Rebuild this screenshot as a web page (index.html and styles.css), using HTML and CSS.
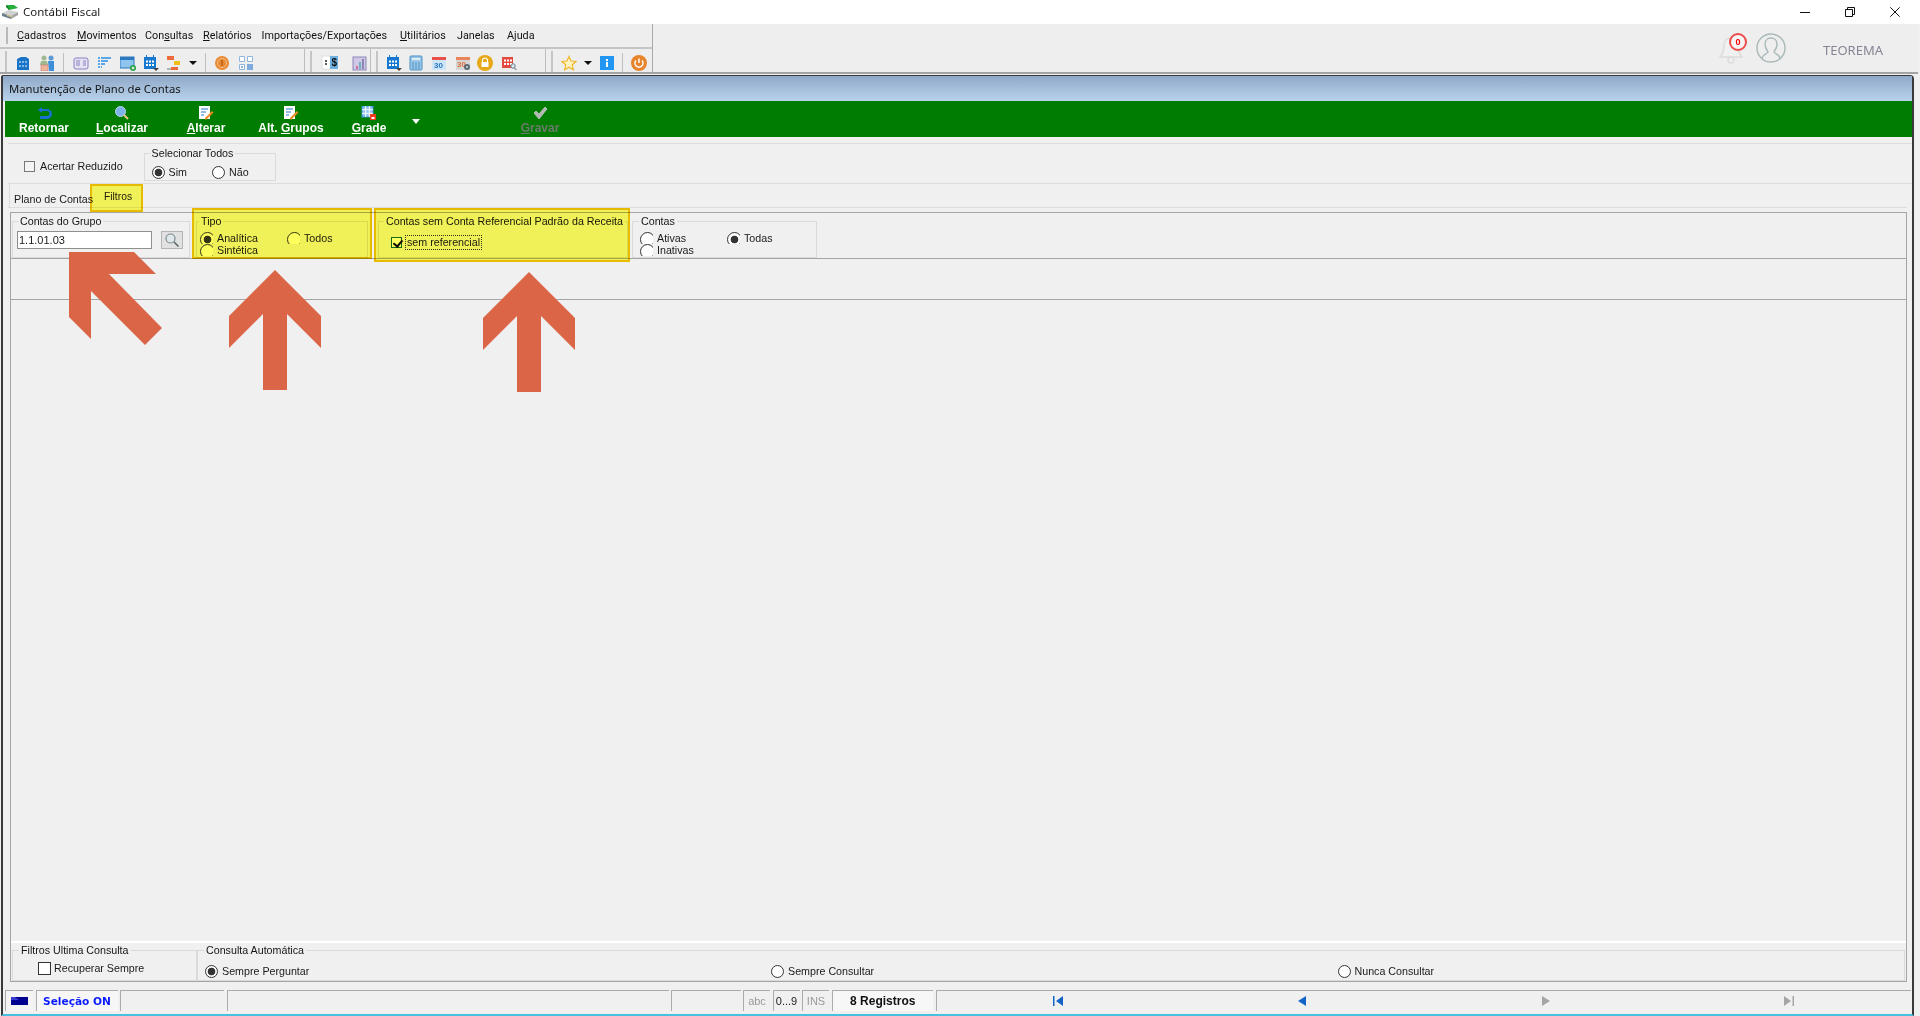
FILE: index.html
```html
<!DOCTYPE html>
<html lang="pt-BR">
<head>
<meta charset="utf-8">
<title>Contábil Fiscal</title>
<link rel="stylesheet" href="styles.css">
</head>
<body>
<header class="titlebar">
  <svg class="app-icon" viewBox="0 0 17 15" width="17" height="15"><path d="M4 0h8l4 3-9 2z" fill="#22b03a"/><path d="M4 0v2l3 3V3z" fill="#14742a"/><path d="M0 8l7-3 9 2-7 4z" fill="#d2d2d2"/><path d="M0 8l9 3v3L0 11z" fill="#6f7f8c"/><path d="M9 11l7-4v3l-7 4z" fill="#a4a4a4"/><path d="M5 10l5 1v1l-5-1z" fill="#e6d27a"/></svg>
  <span class="app-name">Contábil Fiscal</span>
  <div class="win-btns">
    <svg class="wb" viewBox="0 0 10 10" width="10" height="10"><path d="M0 5.500h10" stroke="#111" fill="none"/></svg>
    <svg class="wb" viewBox="0 0 10 10" width="10" height="10"><path d="M.5 2.500h7v7h-7zM2.500 2.500v-2h7v7h-2" stroke="#111" fill="none"/></svg>
    <svg class="wb" viewBox="0 0 10 10" width="10" height="10"><path d="M.3.3l9.400 9.400M9.700.3L.3 9.700" stroke="#111" fill="none"/></svg>
  </div>
</header>

<section class="appbar">
  <div class="bars">
    <nav class="menu">
      <span class="mi mi-1"><u>C</u>adastros</span>
      <span class="mi mi-2"><u>M</u>ovimentos</span>
      <span class="mi mi-3">Con<u>s</u>ultas</span>
      <span class="mi mi-4"><u>R</u>elatórios</span>
      <span class="mi mi-5">Importações/Exportações</span>
      <span class="mi mi-6"><u>U</u>tilitários</span>
      <span class="mi mi-7">Janelas</span>
      <span class="mi">Ajuda</span>
    </nav>
    <div class="tools">
      <div class="tgroup tg-1">
        <svg class="ti i-bldg" viewBox="0 0 16 16" width="16" height="16"><path d="M2 4l4-2h5l3 2v11H2z" fill="#1a73c4"/><path d="M4 6h2v2H4zM7 6h2v2H7zM10 6h2v2h-2zM4 10h2v2H4zM7 10h2v2H7zM10 10h2v2h-2z" fill="#7fb7e8"/></svg>
        <svg class="ti i-people" viewBox="0 0 18 16" width="18" height="16"><circle cx="6" cy="3" r="2.500" fill="#9fb88f"/><circle cx="13" cy="3" r="2.500" fill="#5b9ad6"/><path d="M3 6h6l1 4H2z" fill="#9fb88f"/><path d="M10 6h6v10h-5z" fill="#3d8fd9"/><rect x="3" y="10" width="7" height="6" fill="#f0b49a" stroke="#c77" stroke-width=".6"/></svg>
        <i class="sep sep-a"></i>
        <svg class="ti i-card" viewBox="0 0 16 16" width="16" height="16"><rect x="1" y="3" width="14" height="11" rx="2" fill="#e6e3f5" stroke="#8a80c4"/><path d="M3 6h4M3 8h4M3 10h4M10 6h3M10 8h3M10 10h3" stroke="#8a80c4"/></svg>
        <svg class="ti i-list" viewBox="0 0 16 16" width="16" height="16"><path d="M2 3h13M2 6h10M2 9h7M2 12h4" stroke="#2b8ee8" stroke-width="1.600" stroke-dasharray="2 1 30" fill="none"/></svg>
        <svg class="ti i-win" viewBox="0 0 16 16" width="16" height="16"><rect x="0" y="2" width="14" height="11" fill="#8fc4ee" stroke="#2a78bd"/><rect x="0" y="2" width="14" height="3" fill="#2a78bd"/><circle cx="13" cy="13" r="3" fill="#25a144"/><path d="M11.500 13h3M13 11.500v3" stroke="#fff"/></svg>
        <svg class="ti i-cal" viewBox="0 0 16 16" width="16" height="16"><rect x="1" y="2" width="12" height="12" fill="#1679cf"/><path d="M3 5.500h2v2H3zM6 5.500h2v2H6zM9 5.500h2v2H9zM3 9h2v2H3zM6 9h2v2H6zM9 9h2v2H9z" fill="#fff"/><path d="M3.500 0v3M10.500 0v3" stroke="#1679cf"/><path d="M10 13h6l-3 3z" fill="#444"/></svg>
        <svg class="ti i-tree" viewBox="0 0 16 16" width="16" height="16"><rect x="2" y="1" width="7" height="4" fill="#ec6a3c"/><rect x="9" y="6" width="6" height="4" fill="#f0bf1c"/><rect x="6" y="12" width="7" height="3" fill="#ec6a3c"/><path d="M2 14h4" stroke="#777"/></svg>
        <i class="drop drop-a"></i>
        <i class="sep sep-b"></i>
        <svg class="ti i-coin" viewBox="0 0 16 16" width="16" height="16"><circle cx="8" cy="8" r="7" fill="#e98a32"/><circle cx="8" cy="8" r="4.500" fill="none" stroke="#f6c18e"/><path d="M8 5v6" stroke="#b85f10" stroke-width="1.500"/></svg>
        <svg class="ti i-grid" viewBox="0 0 16 16" width="16" height="16"><path d="M1.500 1.500h5v5h-5zM9.500 1.500h5v5h-5zM1.500 9.500h5v5h-5z" fill="#fff" stroke="#8fb7dc"/><rect x="9" y="9" width="6" height="6" fill="#7faade"/><circle cx="4" cy="12" r="1.200" fill="#8fb7dc"/></svg>
      </div>
      <div class="tgroup tg-2">
        <svg class="ti i-money" viewBox="0 0 18 16" width="18" height="16"><rect x="1" y="1" width="9" height="13" fill="#fff" stroke="#ddd"/><rect x="9" y="1" width="8" height="13" fill="#6db0e0"/><path d="M4 6h2M4 9h2" stroke="#222" stroke-width="1.500"/><text x="10.500" y="11" class="dollar">$</text></svg>
        <svg class="ti i-chart" viewBox="0 0 16 16" width="16" height="16"><rect x="1" y="2" width="13" height="13" fill="#cfc9e6" stroke="#8f86b8"/><path d="M4 11h2v3H4z" fill="#d070a0"/><path d="M7 7h2v7H7z" fill="#6db0c0"/><path d="M10 4h2v10h-2z" fill="#8f86b8"/></svg>
      </div>
      <div class="tgroup tg-3">
        <svg class="ti i-cal2" viewBox="0 0 16 16" width="16" height="16"><rect x="1" y="2" width="12" height="12" fill="#1679cf"/><path d="M3 5.500h2v2H3zM6 5.500h2v2H6zM9 5.500h2v2H9zM3 9h2v2H3zM6 9h2v2H6zM9 9h2v2H9z" fill="#fff"/><path d="M3.500 0v3M10.500 0v3" stroke="#1679cf"/><path d="M10 13h6l-3 3z" fill="#444"/></svg>
        <svg class="ti i-calc" viewBox="0 0 14 16" width="14" height="16"><rect x="1" y="1" width="12" height="14" rx="1" fill="#9cc7e8" stroke="#4a8fc5"/><rect x="3" y="3" width="8" height="2" fill="#d8ecfa"/><path d="M4 7v7M7 7v7M10 7v7" stroke="#4a8fc5"/></svg>
        <svg class="ti i-day" viewBox="0 0 16 16" width="16" height="16"><rect x="1" y="2" width="14" height="13" fill="#cfe6f7"/><rect x="1" y="2" width="14" height="3" fill="#e9504a"/><text x="3" y="13" class="day">30</text></svg>
        <svg class="ti i-dayg" viewBox="0 0 16 16" width="16" height="16"><rect x="1" y="2" width="14" height="13" fill="#d6d6d6"/><rect x="1" y="2" width="14" height="3" fill="#e8835a"/><text x="2" y="12" class="day day-o">30</text><circle cx="12" cy="12" r="3" fill="#5a6a72"/><circle cx="12" cy="12" r="1" fill="#ddd"/></svg>
        <svg class="ti i-lock" viewBox="0 0 16 16" width="16" height="16"><circle cx="8" cy="8" r="8" fill="#e6a817"/><path d="M5.500 7V5.500a2.500 2.500 0 015 0V7" fill="none" stroke="#fff" stroke-width="1.200"/><rect x="4.500" y="7" width="7" height="5" fill="#fff"/></svg>
        <svg class="ti i-table" viewBox="0 0 16 16" width="16" height="16"><rect x="1" y="2" width="11" height="11" fill="#e24a3e"/><path d="M3 4.500h2v2H3zM6 4.500h2v2H6zM9 4.500h2v2H9zM3 8h2v2H3zM6 8h2v2H6zM9 8h2v2H9z" fill="#fff"/><circle cx="12" cy="11" r="2.200" fill="#dcebf5" stroke="#6a7d88"/><path d="M13.500 13l2 2" stroke="#555"/></svg>
      </div>
      <div class="tgroup tg-4">
        <svg class="ti i-star" viewBox="0 0 16 16" width="16" height="16"><path d="M8 1.500l2 4.500 5 .5-3.700 3.300 1 4.900L8 12.200 3.700 14.700l1-4.900L1 6.500 6 6z" fill="#fff4c0" stroke="#f0b429" stroke-width="1.200"/></svg>
        <i class="drop drop-b"></i>
        <svg class="ti i-info" viewBox="0 0 14 14" width="14" height="14"><rect width="14" height="14" fill="#2196f3"/><path d="M6 3h2v2H6zM6 6h2v5H6z" fill="#fff"/></svg>
        <i class="sep sep-c"></i>
        <svg class="ti i-power" viewBox="0 0 16 16" width="16" height="16"><circle cx="8" cy="8" r="8" fill="#e8842c"/><path d="M8 3.500v4.500" stroke="#fff" stroke-width="1.500"/><path d="M5 5.500a4 4 0 106 0" fill="none" stroke="#fff" stroke-width="1.500"/></svg>
      </div>
    </div>
  </div>
  <div class="user-area">
    <div class="bell">
      <svg viewBox="0 0 28 32" width="28" height="32"><path d="M3 25c3-3 4-6 4-11 0-5 3-8 7-8s7 3 7 8c0 5 1 8 4 11z" fill="#f1f1f1" stroke="#dcdcdc" stroke-width="1.600"/><circle cx="14" cy="28" r="3" fill="none" stroke="#dcdcdc" stroke-width="1.400"/></svg>
      <span class="badge">0</span>
    </div>
    <svg class="avatar" viewBox="0 0 30 30" width="30" height="30"><circle cx="15" cy="15" r="14" fill="none" stroke="#a8b8b8" stroke-width="1.400"/><path d="M6 25c1-4 5-4 6-6 0-1-3-3-3-8 0-4 3-6 6-6s6 2 6 6c0 5-3 7-3 8 1 2 5 2 6 6" fill="none" stroke="#a8b8b8" stroke-width="1.400"/></svg>
    <span class="company">TEOREMA</span>
  </div>
</section>

<main class="window">
  <div class="caption">Manutenção de Plano de Contas</div>
  <div class="actions">
    <button class="act a-1">
      <svg viewBox="0 0 16 14" width="16" height="14"><path d="M6 1L2 4l4 3V5h5a2.500 2.500 0 010 5H4v3h7a5 5 0 000-10H6z" fill="#1a6fd0"/></svg>
      <span>Retornar</span>
    </button>
    <button class="act a-2">
      <svg viewBox="0 0 16 14" width="16" height="14"><circle cx="6.500" cy="5.500" r="5" fill="#7fb4e8" stroke="#bcd6ee"/><path d="M10 9l4 4" stroke="#e9c98a" stroke-width="2"/></svg>
      <span><u>L</u>ocalizar</span>
    </button>
    <button class="act a-3">
      <svg viewBox="0 0 16 14" width="16" height="14"><rect x="1" y="0" width="11" height="13" fill="#fff"/><path d="M3 3h7M3 6h5M3 9h3" stroke="#2a78c8" stroke-width="1.200"/><path d="M7 12l7-7 1.500 1.500-7 7H7z" fill="#f08a24"/></svg>
      <span><u>A</u>lterar</span>
    </button>
    <button class="act a-4">
      <svg viewBox="0 0 16 14" width="16" height="14"><rect x="1" y="0" width="11" height="13" fill="#fff"/><path d="M3 3h7M3 6h5M3 9h3" stroke="#2a78c8" stroke-width="1.200"/><path d="M7 12l7-7 1.500 1.500-7 7H7z" fill="#f08a24"/></svg>
      <span>Alt. <u>G</u>rupos</span>
    </button>
    <button class="act a-5">
      <svg viewBox="0 0 16 14" width="16" height="14"><rect x="1" y="0" width="11" height="11" fill="#8fc6f0" stroke="#3a8fd0"/><path d="M1 3.700h11M1 7.300h11M4.700 0v11M8.300 0v11" stroke="#fff"/><rect x="9" y="8" width="6" height="6" fill="#ee3a1a"/><rect x="10.500" y="11" width="3" height="2" fill="#fff"/></svg>
      <span><u>G</u>rade</span>
    </button>
    <i class="act-drop"></i>
    <button class="act a-6">
      <svg viewBox="0 0 16 14" width="16" height="14"><path d="M2 7l2-2 3 3 6-7 2 2-8 10z" fill="#b5b5b5" stroke="#ddd" stroke-width=".6"/></svg>
      <span class="off"><u>G</u>ravar</span>
    </button>
  </div>

  <div class="options">
    <label class="check-inline"><i class="check check-sm"></i>Acertar Reduzido</label>
    <fieldset class="group g-sel">
      <legend>Selecionar Todos</legend>
      <div class="sel-row">
        <span class="opt o-sim"><i class="radio on"></i>Sim</span>
        <span class="opt"><i class="radio"></i>Não</span>
      </div>
    </fieldset>
  </div>

  <div class="tabs">
    <span class="tab">Plano de Contas</span>
    <span class="tab tab-on">Filtros</span>
  </div>

  <div class="page">
    <div class="strip">
      <fieldset class="group g-grupo">
        <legend>Contas do Grupo</legend>
        <div class="search">
          <span class="input">1.1.01.03</span>
          <span class="lookup"><svg viewBox="0 0 16 16" width="16" height="16"><circle cx="6.500" cy="6.500" r="4.500" fill="#dfe8ea" stroke="#7b8a8e" stroke-width="1.200"/><path d="M10 10l4.500 4.500" stroke="#59666a" stroke-width="1.600"/></svg></span>
        </div>
      </fieldset>
      <fieldset class="group g-tipo">
        <legend>Tipo</legend>
        <div class="radios">
          <span class="opt"><i class="radio clip on"></i>Analítica</span>
          <span class="opt"><i class="radio clip"></i>Todos</span>
          <span class="opt"><i class="radio clip"></i>Sintética</span>
        </div>
      </fieldset>
      <fieldset class="group g-ref">
        <legend>Contas sem Conta Referencial Padrão da Receita</legend>
        <span class="ref-check"><i class="check check-on"></i><span class="focus">sem referencial</span></span>
      </fieldset>
      <fieldset class="group g-contas">
        <legend>Contas</legend>
        <div class="radios">
          <span class="opt"><i class="radio clip"></i>Ativas</span>
          <span class="opt"><i class="radio clip on"></i>Todas</span>
          <span class="opt"><i class="radio clip"></i>Inativas</span>
        </div>
      </fieldset>
    </div>
    <div class="strip-empty"></div>
    <div class="filler"></div>
    <div class="foot">
      <fieldset class="group g-ultima">
        <legend>Filtros Ultima Consulta</legend>
        <label class="check-inline recover"><i class="check"></i>Recuperar Sempre</label>
      </fieldset>
      <fieldset class="group g-auto">
        <legend>Consulta Automática</legend>
        <div class="auto-row">
          <span class="opt"><i class="radio on"></i>Sempre Perguntar</span>
          <span class="opt"><i class="radio"></i>Sempre Consultar</span>
          <span class="opt"><i class="radio"></i>Nunca Consultar</span>
        </div>
      </fieldset>
    </div>
  </div>

  <footer class="status">
    <span class="cell c-flag"><svg viewBox="0 0 17 8" width="17" height="8"><rect width="17" height="8" fill="#000090"/><path d="M0 0h4l4 3H0z" fill="#3a3ad0"/></svg></span>
    <span class="cell c-sel">Seleção ON</span>
    <span class="cell c-e1"></span>
    <span class="cell c-e2"></span>
    <span class="cell c-e3"></span>
    <span class="cell c-key off-key">abc</span>
    <span class="cell c-key">0...9</span>
    <span class="cell c-key off-key">INS</span>
    <span class="cell c-reg">8 Registros</span>
    <span class="cell c-nav">
      <span class="nav"><svg viewBox="0 0 12 10" width="12" height="10"><path d="M1 0h1.500v10H1zM11 0v10L4 5z" fill="#1464c8"/></svg></span>
      <span class="nav"><svg viewBox="0 0 12 10" width="12" height="10"><path d="M10 0v10L2 5z" fill="#1464c8"/></svg></span>
      <span class="nav"><svg viewBox="0 0 12 10" width="12" height="10"><path d="M2 0v10l8-5z" fill="#a5a5a5"/></svg></span>
      <span class="nav"><svg viewBox="0 0 12 10" width="12" height="10"><path d="M1 0v10l7-5zM9.500 0H11v10H9.500z" fill="#a5a5a5"/></svg></span>
    </span>
  </footer>
</main>

<div class="hl hl-filtros"></div>
<div class="hl hl-tipo"></div>
<div class="hl hl-ref"></div>
<svg class="arrows" viewBox="0 0 1920 1016" width="1920" height="1016">
  <path d="M69 252H134L156 274H109L162 328L145 345L91 291V339L69 317Z"/>
  <path d="M275 270L321 316V348L287 314V390H263V314L229 348V316Z"/>
  <path d="M529 272L575 318V350L541 316V392H517V316L483 350V318Z"/>
</svg>
</body>
</html>
```
FILE: styles.css
```css
* { box-sizing: border-box; }
html, body { margin: 0; height: 100%; }
body {
  width: 1920px; height: 1016px; overflow: hidden; position: relative;
  display: flex; flex-direction: column;
  background: #f0f0f0; color: #1a1a1a;
  font: 10.700px/13px "Liberation Sans", Arial, sans-serif;
}
i { display: block; font-style: normal; }

.titlebar { height: 24px; flex: none; background: #fff; display: flex; align-items: center; padding-left: 2px; }
.app-name { margin-left: 4px; font: 11.500px/16px "Noto Sans", sans-serif; color: #222; }
.win-btns { margin-left: auto; display: flex; padding-right: 20px; gap: 35px; }
.win-btns .wb { display: block; }

.appbar { height: 50px; flex: none; background: #eeeeee; display: flex; border-bottom: 2px solid #a3a3a3; margin-right: 2px; }
.bars { width: 653px; border-right: 1px solid #a9a9a9; display: flex; flex-direction: column; }
.menu { height: 25px; display: flex; align-items: center; padding: 1px 0 0 17px; border-bottom: 2px solid #c5c5c5; font: 10.800px/14px Roboto, sans-serif; color: #111; white-space: nowrap; position: relative; }
.menu::before { content: ""; position: absolute; left: 6px; top: 3px; bottom: 3px; width: 2px; background: #b9b9b9; }
.mi-1 { width: 60px; } .mi-2 { width: 68px; } .mi-3 { width: 58px; } .mi-4 { width: 58.500px; }
.mi-5 { width: 138.500px; } .mi-6 { width: 57px; } .mi-7 { width: 50px; }
.tools { flex: 1; display: flex; }
.tgroup { display: flex; align-items: center; height: 23px; padding-top: 4px; position: relative; border-right: 1px solid #bdbdbd; }
.tgroup::before { content: ""; position: absolute; left: 5px; top: 2px; bottom: 0; width: 2px; background: #c5c5c5; }
.tg-1 { width: 305px; }
.tg-2 { width: 66px; }
.tg-3 { width: 175px; }
.tg-4 { flex: 1; border-right: 0; }
.ti { display: block; flex: none; }
.i-bldg { margin-left: 15px; } .i-people { margin-left: 6.500px; } .i-card { margin-left: 9px; }
.i-list { margin-left: 7px; } .i-win { margin-left: 7.500px; } .i-cal { margin-left: 7px; }
.i-tree { margin-left: 6.500px; } .i-coin { margin-left: 8px; } .i-grid { margin-left: 8px; }
.i-money { margin-left: 16px; } .i-chart { margin-left: 12.500px; }
.i-cal2 { margin-left: 14.500px; } .i-calc { margin-left: 7.500px; } .i-day { margin-left: 8px; }
.i-dayg { margin-left: 7.500px; } .i-lock { margin-left: 6.500px; } .i-table { margin-left: 8px; }
.i-star { margin-left: 14.500px; } .i-info { margin-left: 7.500px; } .i-power { margin-left: 8px; }
.sep { width: 1px; height: 19px; background: #c0c0c0; flex: none; }
.sep-a { margin-left: 7.500px; } .sep-b { margin-left: 8px; } .sep-c { margin-left: 8.500px; }
.drop { width: 0; height: 0; border: 4px solid transparent; border-top: 4px solid #111; border-bottom: 0; flex: none; }
.drop-a { margin-left: 8px; } .drop-b { margin-left: 7.500px; }
.dollar { font: bold 10px "Liberation Sans", sans-serif; fill: #111; }
.day { font: bold 8px "Liberation Sans", sans-serif; fill: #2a78c8; }
.day-o { fill: #e0703c; }

.user-area { flex: 1; position: relative; display: flex; align-items: center; }
.bell { position: absolute; left: 1064px; top: 8px; width: 28px; height: 32px; }
.bell svg { display: block; }
.badge { position: absolute; left: 12px; top: 1px; width: 18px; height: 18px; border-radius: 50%; border: 2px solid #ee4b4b; background: #f5f5f5; color: #f00; font: bold 9px/14px "Liberation Sans", sans-serif; text-align: center; }
.avatar { position: absolute; left: 1103px; top: 9px; }
.company { position: absolute; left: 1170px; top: 18px; font: 13px/16px "Noto Sans", sans-serif; color: #858595; }

.window { flex: 1; min-height: 0; display: flex; flex-direction: column; margin: 1px 6px 0 1px; width: 1913px; border-left: 2px solid #3a3a3a; border-right: 2px solid #3a3a3a; border-top: 1px solid #3a3a3a; border-bottom: 2px solid #49bfe0; border-top-right-radius: 4px; border-top-left-radius: 2px; background: #f0f0f0; }
.caption { height: 25px; flex: none; padding-left: 6px; background: linear-gradient(#8ea8c8, #bad3eb); font: 11.300px/26px "Noto Sans", sans-serif; color: #151515; }
.actions { height: 36px; flex: none; margin-left: 2px; background: #007c00; display: flex; align-items: flex-start; }
.act { height: 36px; padding: 5px 0 0; margin: 0; border: 0; background: none; display: flex; flex-direction: column; align-items: center; color: #fff; font: bold 12px/14px "Liberation Sans", sans-serif; }
.act svg { display: block; margin-bottom: 1px; }
.a-1, .a-2 { width: 78px; } .a-3 { width: 90px; } .a-4 { width: 80px; } .a-5 { width: 76px; }
.a-6 { width: 80px; margin-left: 75px; }
.off { color: #6c7a6c; }
.act-drop { width: 0; height: 0; margin: 18px 5px 0; border: 4px solid transparent; border-top: 5px solid #fff; border-bottom: 0; }

.options { height: 47px; flex: none; margin: 0 0 0 5px; padding-left: 16px; display: flex; position: relative; border-bottom: 1px solid #dcdcdc; background: linear-gradient(#f0f0f0 6px, #dcdcdc 6px, #dcdcdc 7px, #f0f0f0 7px); align-items: flex-start; }
.check-inline { display: flex; align-items: center; gap: 5px; }
.options > .check-inline { margin-top: 23px; }
.check { width: 13px; height: 13px; border: 1px solid #333; background: #fff; flex: none; position: relative; }
.check-sm { width: 11px; height: 11px; border-color: #777; background: #f4f4f4; }
.check-on { width: 11px; height: 11px; border-color: #16693a; background: #fff; }
.check-on::after { content: ""; position: absolute; left: 2.500px; top: 0; width: 4px; height: 7px; border: solid #111; border-width: 0 2px 2px 0; transform: rotate(40deg); }

.group { margin: 0; padding: 0; border: 1px solid #dadada; min-width: 0; flex: none; }
.group legend { padding: 0 2px; font: 10.700px/13px "Liberation Sans", sans-serif; color: #151515; white-space: nowrap; }
.g-sel { margin: 10px 0 0 21px; width: 132px; height: 34px; }
.g-sel legend { margin-left: 5px; }
.sel-row { display: flex; padding: 6px 0 0 7px; }
.o-sim { width: 60.500px; }
.opt { display: flex; align-items: center; gap: 4px; white-space: nowrap; }
.radio { width: 13px; height: 13px; flex: none; border-radius: 50%; border: 1px solid #333; background: #fff; }
.radio.on { background: radial-gradient(circle, #333 0 3.500px, #fff 4.200px); }
.radio.clip { border: 0; border-radius: 0; background: none; height: 12px; overflow: hidden; position: relative; }
.radio.clip::before { content: ""; position: absolute; left: 0; top: 0; width: 13px; height: 13px; border-radius: 50%; border: 1px solid #333; background: #fff; }
.radio.clip.on::before { background: radial-gradient(circle, #333 0 3.500px, #fff 4.200px); }

.tabs { height: 28px; flex: none; margin-left: 5px; display: flex; padding: 0 0 5px 1px; align-items: stretch; position: relative; }
.tabs::after { content: ""; position: absolute; left: 0; right: 5px; bottom: 4px; height: 1px; background: #dcdcdc; }
.tab { width: 84px; padding: 9px 0 0 4px; border-left: 1px solid #dcdcdc; white-space: nowrap; }
.tab-on { width: 50px; margin-left: 3px; padding: 6px 0 0 8px; border: 0; font-size: 10.300px; }

.page { flex: 1; min-height: 0; margin: 0 5px 0 7px; border: 1px solid #a5a5a5; display: flex; flex-direction: column; }
.strip { height: 46px; flex: none; display: flex; border-bottom: 1px solid #a5a5a5; padding-top: 2px; }
.g-grupo { margin-left: 1px; width: 178px; height: 43px; }
.g-grupo legend { margin-left: 5px; }
.search { display: flex; padding: 3px 0 0 4px; gap: 9px; }
.input { width: 135px; height: 18px; border: 1px solid #8f8f8f; background: #fff; padding-left: 1px; font-size: 11px; line-height: 16px; }
.lookup { width: 22px; height: 18px; border: 1px solid #b5b5b5; background: #e1e1e1; display: flex; align-items: center; justify-content: center; }
.lookup svg { display: block; }
.g-tipo { margin-left: 6px; width: 172px; height: 43px; }
.g-tipo legend { margin-left: 2px; }
.radios { display: grid; grid-template-columns: 87px 1fr; grid-auto-rows: 12px; padding: 4px 0 0 3px; height: 28px; overflow: hidden; }
.g-ref { margin-left: 10px; width: 250px; height: 43px; }
.g-ref legend { margin-left: 5px; }
.ref-check { display: flex; align-items: center; gap: 4px; padding: 8px 0 0 12px; }
.focus { outline: 1px dotted #333; padding: 0 1px; line-height: 13px; }
.g-contas { margin-left: 4px; width: 185px; height: 43px; }
.g-contas legend { margin-left: 6px; }
.g-contas .radios { padding-left: 7px; }
.strip-empty { height: 41px; flex: none; border-bottom: 1px solid #a5a5a5; }
.filler { flex: 1; }
.foot { height: 40px; flex: none; display: flex; border-top: 2px solid #fff; padding: 1px 0 0; align-items: flex-start; }
.g-ultima { width: 185px; height: 37px; margin-left: 1px; }
.g-ultima legend, .g-auto legend { margin-left: 6px; }
.recover { padding: 5px 0 0 25px; gap: 3px; }
.g-auto { flex: 1; height: 37px; margin-right: 1px; }
.auto-row { display: grid; grid-template-columns: 566px 566.500px 1fr; padding: 8px 0 0 7px; }

.status { height: 22px; flex: none; margin: 8px 0 2px 2px; display: flex; gap: 2.500px; }
.cell { border-top: 1px solid #ababab; border-left: 1px solid #ababab; height: 21px; display: flex; align-items: center; justify-content: center; flex: none; }
.c-flag { width: 28px; background: #f4f4f4; }
.c-flag svg { display: block; }
.c-sel { width: 82px; font: bold 10.600px/14px "DejaVu Sans", sans-serif; color: #0a1cff; background: #f7f7f7; }
.c-e1 { width: 104px; } .c-e2 { width: 442px; } .c-e3 { width: 69.500px; }
.c-key { width: 27px; font-size: 11px; color: #222; }
.off-key { color: #9a9a9a; }
.c-reg { width: 101.500px; font: bold 12px/14px "Liberation Sans", sans-serif; color: #111; background: #f7f7f7; }
.c-nav { width: 975.500px; display: grid; grid-template-columns: repeat(4, 1fr); }
.nav { display: flex; justify-content: center; }
.nav svg { display: block; }

.hl { position: absolute; background: #ffff5e; border: 2px solid #f6c800; mix-blend-mode: multiply; }
.hl-filtros { left: 90px; top: 184px; width: 53px; height: 28px; }
.hl-tipo { left: 192px; top: 208px; width: 180px; height: 51px; }
.hl-ref { left: 374px; top: 208px; width: 256px; height: 54px; }
.arrows { position: absolute; left: 0; top: 0; pointer-events: none; }
.arrows path { fill: #db6547; }
```
